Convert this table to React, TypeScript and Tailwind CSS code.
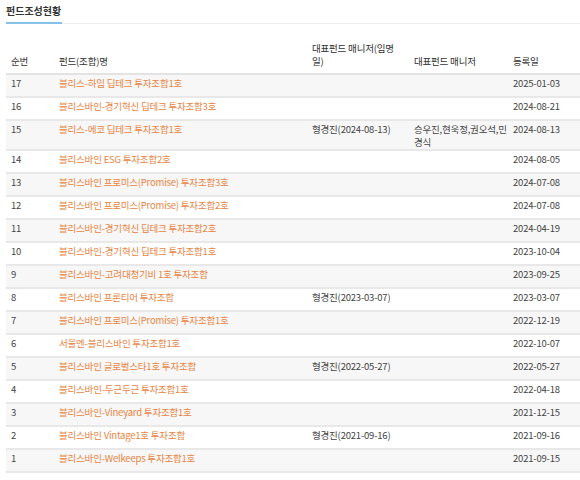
import React from "react";

interface FundRow {
  no: number;
  name: string;
  appointed?: string;
  managers?: string;
  date: string;
}

const rows: FundRow[] = [
  { no: 17, name: "블리스-하임 딥테크 투자조합1호", date: "2025-01-03" },
  { no: 16, name: "블리스바인-경기혁신 딥테크 투자조합3호", date: "2024-08-21" },
  {
    no: 15,
    name: "블리스-에코 딥테크 투자조합1호",
    appointed: "형경진(2024-08-13)",
    managers: "승우진,현욱정,권오석,민경식",
    date: "2024-08-13",
  },
  { no: 14, name: "블리스바인 ESG 투자조합2호", date: "2024-08-05" },
  { no: 13, name: "블리스바인 프로미스(Promise) 투자조합3호", date: "2024-07-08" },
  { no: 12, name: "블리스바인 프로미스(Promise) 투자조합2호", date: "2024-07-08" },
  { no: 11, name: "블리스바인-경기혁신 딥테크 투자조합2호", date: "2024-04-19" },
  { no: 10, name: "블리스바인-경기혁신 딥테크 투자조합1호", date: "2023-10-04" },
  { no: 9, name: "블리스바인-고려대청기비 1호 투자조합", date: "2023-09-25" },
  { no: 8, name: "블리스바인 프론티어 투자조합", appointed: "형경진(2023-03-07)", date: "2023-03-07" },
  { no: 7, name: "블리스바인 프로미스(Promise) 투자조합1호", date: "2022-12-19" },
  { no: 6, name: "서울엔-블리스바인 투자조합1호", date: "2022-10-07" },
  { no: 5, name: "블리스바인 글로벌스타1호 투자조합", appointed: "형경진(2022-05-27)", date: "2022-05-27" },
  { no: 4, name: "블리스바인-두근두근 투자조합1호", date: "2022-04-18" },
  { no: 3, name: "블리스바인-Vineyard 투자조합1호", date: "2021-12-15" },
  { no: 2, name: "블리스바인 Vintage1호 투자조합", appointed: "형경진(2021-09-16)", date: "2021-09-16" },
  { no: 1, name: "블리스바인-Welkeeps 투자조합1호", date: "2021-09-15" },
];

export default function App() {
  return (
    <div
      className="w-[580px] h-[480px] overflow-hidden bg-white pl-[6px] text-[#444]"
      style={{ fontFamily: '"Noto Sans CJK KR", "Noto Sans", sans-serif' }}
    >
      {/* Title tab */}
      <div className="border-b border-[#eeeeee]">
        <h2 className="w-[56px] pt-[3px] pb-[4px] text-[10px] leading-[15px] font-bold text-[#333] border-b-2 border-[#85c1e9] -mb-px">
          펀드조성현황
        </h2>
      </div>

      <table className="mt-[18px] w-[574px] table-fixed border-collapse text-[9.5px] leading-[13px] tracking-[-0.2px]">
        <colgroup>
          <col className="w-[48px]" />
          <col className="w-[253px]" />
          <col className="w-[102px]" />
          <col className="w-[99px]" />
          <col className="w-[72px]" />
        </colgroup>
        <thead>
          <tr className="border-b-2 border-[#e3e3e3] text-[#333]">
            <th className="pl-[5px] pr-[4px] pb-[5px] align-bottom text-left font-normal">순번</th>
            <th className="pl-[5px] pr-[4px] pb-[5px] align-bottom text-left font-normal">펀드(조합)명</th>
            <th className="pl-[5px] pr-[4px] pb-[5px] align-bottom text-left font-normal">대표펀드 매니저(임명일)</th>
            <th className="pl-[5px] pr-[4px] pb-[5px] align-bottom text-left font-normal">대표펀드 매니저</th>
            <th className="pl-[5px] pr-[4px] pb-[5px] align-bottom text-left font-normal">등록일</th>
          </tr>
        </thead>
        <tbody>
          {rows.map((r, i) => (
            <tr
              key={r.no}
              className={`border-b-2 border-[#e8e8e8] ${i % 2 === 0 ? "bg-[#f7f7f7]" : "bg-white"}`}
            >
              <td className="h-[23px] pl-[5px] pt-[2px] pb-0 align-top">{r.no}</td>
              <td className="pl-[5px] pt-[2px] pb-0 align-top">
                <a href="#" className="text-[#e8843f]">
                  {r.name}
                </a>
              </td>
              <td className="pl-[5px] pt-[2px] pb-0 align-top">{r.appointed}</td>
              <td className="pl-[5px] pr-0 pt-[2px] pb-0 align-top">{r.managers}</td>
              <td className="pl-[5px] pt-[2px] pb-0 align-top">{r.date}</td>
            </tr>
          ))}
        </tbody>
      </table>
    </div>
  );
}
